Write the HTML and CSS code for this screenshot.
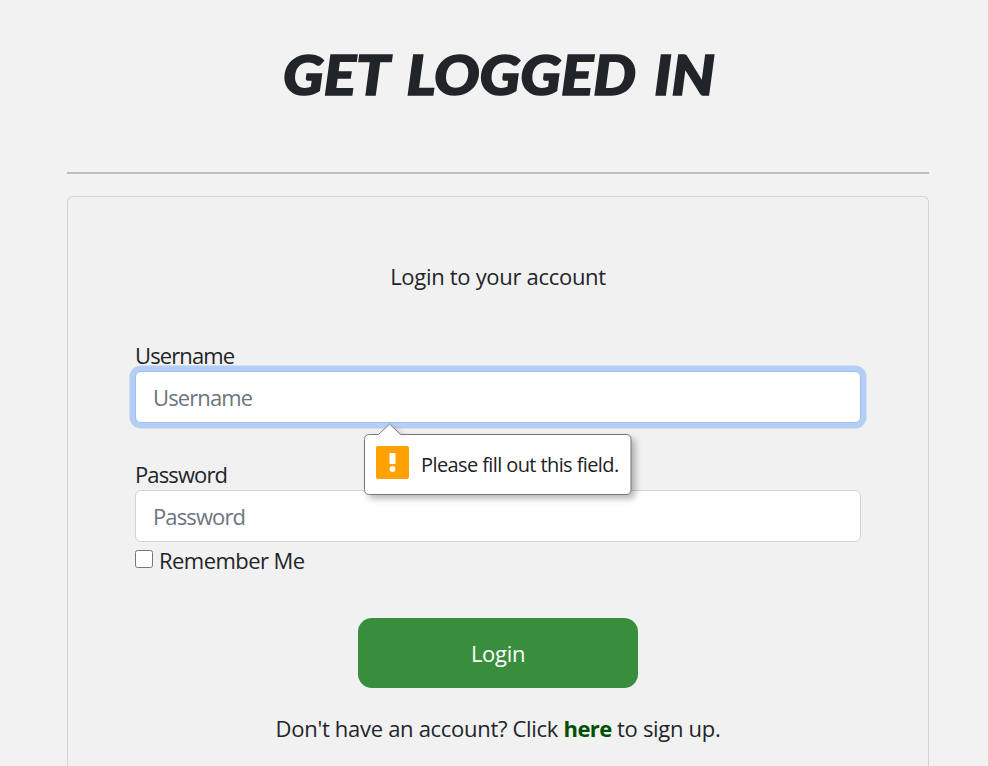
FILE: index.html
```html
<!DOCTYPE html>
<html lang="en">
<head>
<meta charset="utf-8">
<title>Login</title>
<link rel="stylesheet" href="styles.css">
</head>
<body>
<main class="page">
  <h1 class="title"><svg class="fit" width="432" height="60"><text x="0" y="50" textLength="432" lengthAdjust="spacingAndGlyphs">GET LOGGED IN</text></svg></h1>
  <hr class="rule">
  <section class="card">
    <p class="intro">Login to your account</p>
    <form class="form">
      <div class="field">
        <label class="label" for="user">Username</label>
        <input class="input focused" id="user" type="text" placeholder="Username">
        <div class="tip" role="alert">
          <svg class="bubble" width="280" height="84" viewBox="0 0 280 84"><path d="M5.500 13.500H14.500L25.500 3L36.500 13.500H262Q267 13.500 267 18.500V68.500Q267 73.500 262 73.500H5.500Q.5 73.500 .5 68.500V18.500Q.5 13.500 5.500 13.500Z"/></svg>
          <svg class="warn" width="33" height="33" viewBox="0 0 33 33"><rect width="33" height="33" rx="2" fill="#ffa100"/><path d="M13.500 7h6v11h-6z" fill="#fff"/><circle cx="16.500" cy="23" r="2.900" fill="#fff"/></svg>
          <span class="tip-text">Please fill out this field.</span>
        </div>
      </div>
      <div class="field second">
        <label class="label" for="pass">Password</label>
        <input class="input" id="pass" type="password" placeholder="Password">
      </div>
      <label class="remember"><input class="check" type="checkbox"><span class="remember-text">Remember Me</span></label>
      <button class="login" type="button">Login</button>
    </form>
    <p class="signup">Don't have an account? Click <a class="here" href="#">here</a> to sign up.</p>
  </section>
</main>
</body>
</html>
```
FILE: styles.css
```css
* { box-sizing: border-box; }
body { margin: 0; background: #f2f2f2; color: #212529; font: 22px/34px "Open Sans", "Noto Sans", sans-serif; letter-spacing: -.3px; }
.page { width: 862px; margin: 0 auto 0 67px; }
.title { height: 172px; margin: 0; padding-top: 45px; text-align: center; line-height: 0; }
.fit { overflow: visible; font: italic 900 54.5px Lato, sans-serif; letter-spacing: 0; word-spacing: 5px; fill: #212529; stroke: #212529; stroke-width: 1.6px; margin-left: 2px; }
.rule { height: 2px; margin: 0 0 22px; border: 0; background: #bfbfbf; }
.card { height: 570px; padding: 62px 67px 0; border: 1px solid #d4d4d4; border-bottom: 0; border-radius: 6px 6px 0 0; background: #f1f1f1; }
.intro { margin: 0 0 45px; text-align: center; }
.form { display: flex; flex-direction: column; }
.field { position: relative; display: flex; flex-direction: column; height: 119px; }
.second { height: 85px; }
.label { height: 33px; letter-spacing: -.88px; }
.input { width: 726px; height: 52px; padding: 0 17px; border: 1px solid #ced4da; border-radius: 6px; background: #fff; color: #495057; font: inherit; letter-spacing: -.88px; outline: 0; }
.input::placeholder { color: #6c757d; opacity: 1; }
.focused { border-color: #9fc0f5; box-shadow: 0 0 0 5.5px #b5cff4; }
.tip { position: absolute; z-index: 2; left: 229px; top: 83px; width: 280px; height: 84px; display: flex; align-items: flex-start; padding: 25px 0 0 12px; gap: 12px; font-size: 20px; letter-spacing: -.6px; color: #222; white-space: nowrap; }
.bubble { position: absolute; left: 0; top: 0; fill: #fff; stroke: #777; filter: drop-shadow(4px 4px 3px #0004); }
.warn, .tip-text { position: relative; }
.tip-text { line-height: 38px; }
.remember { display: flex; align-items: center; gap: 6px; height: 34px; letter-spacing: -.55px; }
.remember-text { padding-top: 2px; }
.check { width: 18px; height: 18px; margin: 0; }
.login { align-self: center; width: 280px; height: 70px; margin-top: 42px; border: 0; border-radius: 14px; background: #388e3c; color: #fff; font: inherit; letter-spacing: inherit; }
.signup { margin: 23px 0 0; text-align: center; }
.here { color: #005000; font-weight: 700; letter-spacing: -.6px; text-decoration: none; }
```
